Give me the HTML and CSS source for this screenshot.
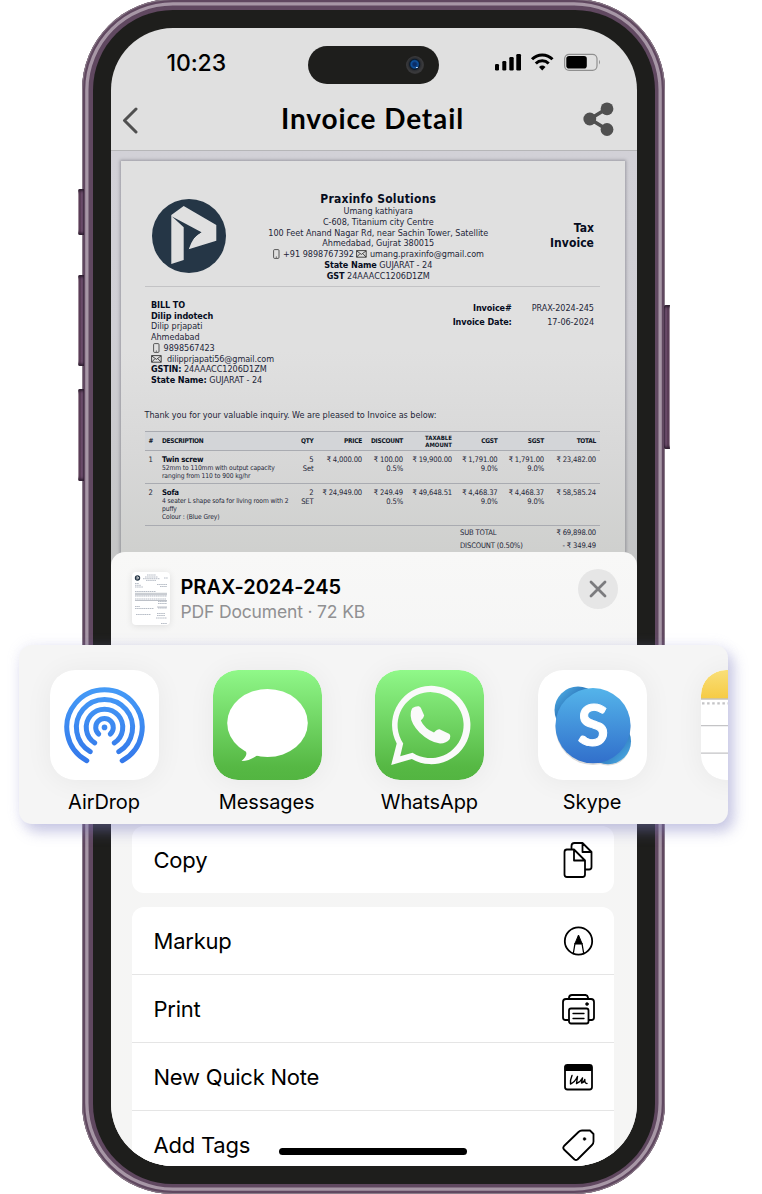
FILE: index.html
```html
<!DOCTYPE html>
<html lang="en">
<head>
<meta charset="utf-8">
<title>Invoice Detail</title>
<link rel="stylesheet" href="styles.css">
</head>
<body>
<svg width="0" height="0" class="defs">
  <defs>
    <symbol id="mobile" viewBox="0 0 7 10"><rect x=".6" y=".6" width="5.4" height="8.8" rx="1" fill="none" stroke="#333" stroke-width=".8"/><path d="M2.8 8.1h1.2" stroke="#333" stroke-width=".8"/></symbol>
    <symbol id="mail" viewBox="0 0 11 8"><path d="M.6.6h9.6v6.6H.6zM.6.8l4.8 3.6L10.200.8M.6 7.200l3.200-3.400M10.200 7.200 7 3.800" fill="none" stroke="#333" stroke-width=".9"/></symbol>
  </defs>
</svg>
<div class="stage">
  <div class="phone">
    <i class="key key-mute"></i><i class="key key-up"></i><i class="key key-down"></i><i class="key key-power"></i>
    <div class="bezel">
    <div class="screen">
      <div class="status">
        <span class="time">10:23</span>
        <span class="island"><i class="camera"></i></span>
        <svg class="signals" width="106" height="18" viewBox="0 0 106 18">
          <rect x="0" y="11" width="4" height="6.500" rx="1.200"/><rect x="7.300" y="8" width="4" height="9.500" rx="1.200"/><rect x="14.300" y="4" width="4.400" height="13.500" rx="1.200"/><rect x="21.300" y="1" width="4.700" height="16.500" rx="1.200"/>
          <g fill="none" stroke="#000" stroke-width="3"><path d="M37 6.300a14.500 14.500 0 0 1 20.500 0"/><path d="M40.800 10.500a9.200 9.200 0 0 1 12.900 0"/></g>
          <path d="M47.200 17.500l-3.200-3.400a4.800 4.800 0 0 1 6.500 0z"/>
          <rect x="69.600" y="1.300" width="32.400" height="16" rx="4.500" fill="none" stroke="#8f8f8f" stroke-width="1.200"/><rect x="71.300" y="3" width="20.500" height="12.600" rx="2.800"/><path d="M104 6.800q2 2.400 0 4.800z" fill="#8f8f8f"/>
        </svg>
      </div>
      <div class="nav">
        <svg class="back" width="16" height="27" viewBox="0 0 16 27"><path d="M14 2 2.500 13.500 14 25" fill="none" stroke="#505050" stroke-width="3" stroke-linecap="round" stroke-linejoin="round"/></svg>
        <h1>Invoice Detail</h1>
        <svg width="31" height="34" viewBox="0 0 31 34"><path d="M24 6.500 7 17l17 10.500" fill="none" stroke="#505050" stroke-width="3.600"/><circle cx="24" cy="6.800" r="6.400" fill="#505050"/><circle cx="6.800" cy="17" r="6.400" fill="#505050"/><circle cx="24" cy="27.500" r="6.400" fill="#505050"/></svg>
      </div>
      <div class="viewer">
        <div class="paper">
          <div class="letterhead">
            <svg class="logo" width="74" height="74" viewBox="0 0 74 74"><circle cx="37" cy="37" r="37" fill="#253646"/><path d="M19.300 16 31.700 7 64.300 26v15.700L36.700 50.300Q37 41 49.300 33.300L31.700 28.300V61L19.300 65Z" fill="#e0e0e0"/><path d="M20 17.600 49.500 33.300Q42 35.500 36.700 50.300L32 52V28.500Z" fill="#253646"/></svg>
            <div class="company">
              <h2>Praxinfo Solutions</h2>
              <p>Umang kathiyara</p>
              <p>C-608, Titanium city Centre</p>
              <p>100 Feet Anand Nagar Rd, near Sachin Tower, Satellite</p>
              <p>Ahmedabad, Gujrat 380015</p>
              <p><svg class="mob" width="7" height="10"><use href="#mobile"/></svg> +91 9898767392 <svg class="eml" width="11" height="8"><use href="#mail"/></svg> umang.praxinfo@gmail.com</p>
              <p><b>State Name</b> GUJARAT - 24</p>
              <p><b>GST</b> 24AAACC1206D1ZM</p>
            </div>
            <div class="kind">Tax<br>Invoice</div>
          </div>
          <div class="parties">
            <div class="billto">
              <p><b>BILL TO</b></p>
              <p><b>Dilip indotech</b></p>
              <p>Dilip prjapati</p>
              <p>Ahmedabad</p>
              <p><svg class="mob lead" width="7" height="10"><use href="#mobile"/></svg> 9898567423</p>
              <p class="tight"><svg class="eml" width="11" height="8"><use href="#mail"/></svg>&nbsp; dilipprjapati56@gmail.com</p>
              <p><b>GSTIN:</b> 24AAACC1206D1ZM</p>
              <p><b>State Name:</b> GUJARAT - 24</p>
            </div>
            <div class="meta">
              <b>Invoice#</b><span>PRAX-2024-245</span>
              <b>Invoice Date:</b><span>17-06-2024</span>
            </div>
          </div>
          <p class="thanks">Thank you for your valuable inquiry. We are pleased to Invoice as below:</p>
          <div class="row head"><span>#</span><span>DESCRIPTION</span><span>QTY</span><span>PRICE</span><span>DISCOUNT</span><span class="two">TAXABLE<br>AMOUNT</span><span>CGST</span><span>SGST</span><span>TOTAL</span></div>
          <div class="row first"><span>1</span><div class="item"><b>Twin screw</b><small>52mm to 110mm with output capacity</small><small>ranging from 110 to 900 kg/hr</small></div><span>5<br>Set</span><span>₹ 4,000.00</span><span>₹ 100.00<br>0.5%</span><span>₹ 19,900.00</span><span>₹ 1,791.00<br>9.0%</span><span>₹ 1,791.00<br>9.0%</span><span>₹ 23,482.00</span></div>
          <div class="row second"><span>2</span><div class="item"><b>Sofa</b><small>4 seater L shape sofa for living room with 2</small><small>puffy</small><small>Colour : (Blue Grey)</small></div><span>2<br>SET</span><span>₹ 24,949.00</span><span>₹ 249.49<br>0.5%</span><span>₹ 49,648.51</span><span>₹ 4,468.37<br>9.0%</span><span>₹ 4,468.37<br>9.0%</span><span>₹ 58,585.24</span></div>
          <div class="totals"><span>SUB TOTAL</span><span>₹ 69,898.00</span><span>DISCOUNT (0.50%)</span><span>- ₹ 349.49</span></div>
        </div>
      </div>
      <div class="sheet">
        <div class="file">
          <svg class="thumb" width="38" height="53" viewBox="0 0 38 53">
            <circle cx="5.500" cy="6" r="2.700" fill="#253646"/><path d="M5 4.500v3M5 4.700l2 1.200-1.500.8" stroke="#fff" stroke-width=".7" fill="none"/>
            <g stroke="#8790a0" stroke-width=".7" stroke-dasharray="1.600 .5" opacity=".85"><path d="M15 3h9M13 5h13M11 6.700h17M14 8.400h10M32 6h4M3 11.500h4M3 13.300h6M3 15h8M25 12.500h10M28 14.500h7M3 19.500h21M3 24h32M3 27h31M26 29.500h9M26 31.500h9M26 36h9M3 34.500h5M3 36.500h19M4 42.500h15M25 41.500h8M25 43.500h8M24 46h11M29 51.500h6"/></g>
            <g stroke="#7a8291" stroke-width=".5"><path d="M3 21.300h32M3 22.700h32M25 35h10M3 28.500h32"/></g>
          </svg>
          <div class="names"><strong>PRAX-2024-245</strong><span>PDF Document · 72 KB</span></div>
          <span class="close"><svg width="18" height="18" viewBox="0 0 18 18"><path d="M2 2l14 14M16 2 2 16" stroke="#7b7b7e" stroke-width="2.800" stroke-linecap="round"/></svg></span>
        </div>
        <div class="card copy">
          <div class="action"><span>Copy</span>
            <svg width="34" height="40" viewBox="0 0 34 40"><path d="M10.500 8V6a3 3 0 0 1 3-3H21.500l9 9v15a2.500 2.500 0 0 1-2.500 2.500h-4M21.500 3v9h9M5.500 9.500h7.500L24 20.500v14a2.500 2.500 0 0 1-2.500 2.500H6a2.500 2.500 0 0 1-2.500-2.500V12a2.500 2.500 0 0 1 2.500-2.500M13 9.500V20.500H24"/></svg></div>
        </div>
        <div class="card">
          <div class="action"><span>Markup</span>
            <svg width="34" height="34" viewBox="0 0 34 34"><circle cx="17.500" cy="17" r="13.700"/><path d="M12.300 29.500 14 19.500h7L22.700 29.500" stroke-width="1.300"/><path d="M14 19.500 17.500 11l3.500 8.500z" fill="#000" stroke-width="1"/></svg></div>
          <div class="action"><span>Print</span>
            <svg width="34" height="34" viewBox="0 0 34 34"><path d="M7 28H4.500a2.500 2.500 0 0 1-2.500-2.500V10a3 3 0 0 1 3-3h25a3 3 0 0 1 3 3v15.500a2.500 2.500 0 0 1-2.500 2.500H28M8 7V5.500A3 3 0 0 1 11 3h13.500A3 3 0 0 1 27 5.500V7"/><rect x="8" y="16.500" width="19.500" height="15" rx="2"/><path d="M12 21.500h11M12 26.500h11" stroke-width="1.300"/><circle cx="26" cy="12" r="1.500" fill="#000" stroke-width=".5"/></svg></div>
          <div class="action"><span>New Quick Note</span>
            <svg width="34" height="34" viewBox="0 0 34 34"><rect x="4" y="5" width="27" height="24.500" rx="2.500"/><path d="M4.500 6h26v4.500h-26z" fill="#000" stroke-width="1"/><path d="M11 15.500Q9 20 9.500 24 14 22 16.500 16.500L15.500 23.500Q19.500 22 21.500 18L20.500 23Q23 22.500 23.800 19.500 23.500 23.500 26 23.500" stroke-width="1.400"/></svg></div>
          <div class="action"><span>Add Tags</span>
            <svg width="34" height="34" viewBox="0 0 34 34"><path d="M3 18 17.500 4Q19 2.500 21 2.500h8l3.500 3.500v7.500q0 2-1.500 3.500L16.500 31.500q-1.500 1-3 0L3 21.500Q1.500 19.800 3 18Z"/><circle cx="23.500" cy="11" r="1.400" fill="#000" stroke-width=".4"/></svg></div>
        </div>
        <i class="home"></i>
      </div>
    </div>
    </div>
  </div>

  <div class="share">
    <div class="app">
      <svg width="109" height="110" viewBox="0 0 109 110"><defs><linearGradient id="ad" gradientUnits="userSpaceOnUse" x1="0" y1="17" x2="0" y2="93"><stop offset="0" stop-color="#459bf7"/><stop offset="1" stop-color="#3478ea"/></linearGradient></defs>
        <rect width="109" height="110" rx="25" fill="#fff"/>
        <g fill="none" stroke="url(#ad)" stroke-width="5" stroke-linecap="round"><path d="M36.800 90.700a37.700 37.700 0 1 1 35.400 0"/><path d="M40.200 81.700a28.100 28.100 0 1 1 28.600 0"/><path d="M44.700 72.800a18.250 18.250 0 1 1 19.600 0"/><path d="M48.700 64a8.800 8.800 0 1 1 11.600 0"/></g><circle cx="54.500" cy="57.400" r="2.800" fill="#3c88f0"/></svg>
      <span>AirDrop</span>
    </div>
    <div class="app">
      <svg width="109" height="110" viewBox="0 0 109 110"><defs><linearGradient id="gr" x1="0" y1="0" x2="0" y2="1"><stop offset="0" stop-color="#90f989"/><stop offset=".1" stop-color="#89f081"/><stop offset=".88" stop-color="#56b844"/><stop offset="1" stop-color="#53b541"/></linearGradient></defs>
        <rect width="109" height="110" rx="25" fill="url(#gr)"/><ellipse cx="54.500" cy="53" rx="40.300" ry="34" fill="#fff"/><path d="M32 80Q36 85 28.500 91 36 91 44 85.500L54 84 40 76Z" fill="#fff"/></svg>
      <span>Messages</span>
    </div>
    <div class="app">
      <svg width="109" height="110" viewBox="0 0 109 110"><rect width="109" height="110" rx="25" fill="url(#gr)"/>
        <path fill="#fafafa" fill-rule="evenodd" d="M16.200 95 21.700 73.500A39.200 39.200 0 1 1 36.800 89ZM25.200 86.200 37.500 82.700A33 33 0 1 0 28.200 73.500Z"/>
        <path fill="#fafafa" d="M37.500 38Q40.500 35.800 44 36.200L45.800 37.800 49.200 45.600Q49 47.500 45.800 50.400 49.500 58.500 59 62.600 62.500 59 64.500 59.300L74.500 64Q76 65.500 74.800 69 71.500 73.300 65 73.500 55 72.500 44.500 62.500 36 53.500 35.700 46 35.500 40.500 37.500 38Z"/></svg>
      <span>WhatsApp</span>
    </div>
    <div class="app">
      <svg width="109" height="110" viewBox="0 0 109 110"><defs><linearGradient id="sk" x1="0" y1="0" x2="0" y2="1"><stop offset="0" stop-color="#54b4ea"/><stop offset="1" stop-color="#316fcb"/></linearGradient><linearGradient id="sa" x1="0" y1="0" x2="1" y2="1"><stop offset=".1" stop-color="#4ba9e2"/><stop offset=".42" stop-color="#2a70b5"/></linearGradient><linearGradient id="sb" x1="0" y1="0" x2="1" y2="1"><stop offset=".6" stop-color="#2f78bd"/><stop offset=".9" stop-color="#4aa9e2"/></linearGradient></defs>
        <rect width="109" height="110" rx="25" fill="#fff"/>
        <g fill="#000" opacity=".14"><circle cx="55" cy="57.500" r="37.500"/><circle cx="70" cy="73" r="22.500"/></g>
        <circle cx="40" cy="40" r="23.500" fill="url(#sa)"/><circle cx="70" cy="71.300" r="23" fill="url(#sb)"/>
        <circle cx="55" cy="55.700" r="37.600" fill="url(#sk)"/><text x="55" y="75.500" class="skype-s" text-anchor="middle">S</text></svg>
      <span>Skype</span>
    </div>
    <div class="app notes">
      <svg width="109" height="110" viewBox="0 0 109 110"><defs><linearGradient id="nt" x1="0" y1="0" x2="0" y2="1"><stop offset="0" stop-color="#f9df78"/><stop offset="1" stop-color="#f6cb45"/></linearGradient><clipPath id="nc"><rect width="109" height="110" rx="25"/></clipPath></defs>
        <g clip-path="url(#nc)"><rect width="109" height="110" fill="#fff"/><rect width="109" height="28.500" fill="url(#nt)"/><path d="M0 29h109" stroke="#a9a494" stroke-width="1.200"/><path d="M1 33.300h109" stroke="#c4c4c6" stroke-width="2.200" stroke-dasharray="2.500 2.600"/><path d="M0 55.700h109M0 83.200h109" stroke="#c4c4c6" stroke-width="1.200"/></g></svg>
    </div>
  </div>
</div>
</body>
</html>
```
FILE: styles.css
```css
* { box-sizing: border-box; }
body { margin: 0; background: #fff; font-family: Inter, "Liberation Sans", sans-serif; color: #000; }
h1, h2, p { margin: 0; font-weight: inherit; }
.defs { position: absolute; }
.stage { position: relative; width: 762px; height: 1194px; overflow: hidden; }

/* handset */
.phone {
  position: relative; width: 583px; height: 1195px; margin: -1px 0 0 82px; padding: 10.5px; border-radius: 91px;
  background: #604860;
  box-shadow: inset 0 0 0 1px #8a7b88, inset 0 0 0 3.200px #604860, inset 0 0 0 6.500px #a797a6;
}
.bezel { height: 1174px; border-radius: 80px; background: #1e1e1c; padding: 18.500px 18px 18px 18.500px; }
.key { position: absolute; width: 6px; left: -4.500px; border-radius: 2px 0 0 2px; background: linear-gradient(90deg, #a996a5 0 1px, #5a3d57 1px 2.500px, #705070 4px, #3d2940); box-shadow: inset 0 4px 3px -2px #2c1d2e, inset 0 -4px 3px -2px #2c1d2e; }
.key-mute { top: 190px; height: 46px; }
.key-up { top: 276px; height: 91px; }
.key-down { top: 390px; height: 92px; }
.key-power { top: 306px; height: 144px; left: auto; right: -4.500px; border-radius: 0 2px 2px 0; transform: scaleX(-1); }

.screen { width: 525.500px; height: 1137.500px; border-radius: 62px; overflow: hidden; display: flex; flex-direction: column; background: #e0e0e0; }

.status { height: 60px; padding: 13px 36px 0 55.500px; display: grid; grid-template-columns: 141.500px 131px 1fr; align-items: center; flex: none; }
.time { font-size: 23px; font-weight: 500; letter-spacing: -.1px; line-height: 36px; margin-top: -3px; }
.island { width: 131px; height: 38px; border-radius: 19px; background: #1e1e1c; display: flex; align-items: center; justify-content: flex-end; padding-right: 15px; }
.camera { width: 18px; height: 18px; border-radius: 50%; background: radial-gradient(circle at 60% 64%, #d8e8ff 0 .6px, transparent 1px), radial-gradient(circle at 48% 46%, #0b2d66 0 1.500px, #0f54a0 3.500px, #0b1a2c 5px, #2b2d31 6px, #3a3a3c 8px, #28282a); }
.signals { justify-self: end; margin-top: -5px; }

.nav { height: 63px; flex: none; padding: 0 23px 0 11px; display: flex; align-items: center; border-bottom: 1px solid #b6b6b8; }
.back { margin-top: 2px; }
.nav h1 { flex: 1; font-family: Lato, sans-serif; font-weight: 700; font-size: 28px; letter-spacing: .88px; margin: -3px 0 0 143px; line-height: 34px; }

/* document preview */
.viewer { flex: none; height: 414.500px; margin-bottom: -14px; padding: 10px 11.500px 0 9.500px; background: linear-gradient(#d2d1d7 0, #d0cfd5 180px, #c4c5c5); overflow: hidden; }
.paper { height: 440px; padding: 32px 25px 0 24px; background: linear-gradient(#e0e0e0 0, #e0e0e0 190px, #d8d8d8 290px, #cfd0ce 390px); box-shadow: 0 0 3px 1px rgba(70, 70, 80, .4); font: 9px/10.700px "DejaVu Sans Condensed", "DejaVu Sans", sans-serif; color: #1e2638; white-space: nowrap; letter-spacing: -.03px; }
.paper b, .paper h2, .kind { color: #060c20; letter-spacing: -.1px; }
.letterhead { height: 94px; display: grid; grid-template-columns: 81px 1fr 81px; border-bottom: 1.500px solid #c3c3c5; }
.logo { margin: 6px 0 0 7px; }
.company { text-align: center; margin-left: 12px; }
.company h2 { font-size: 12px; font-weight: 700; line-height: 13.300px; letter-spacing: .24px; }
.mob, .eml { vertical-align: -2px; }
.mob { margin-right: 1px; }
.eml { vertical-align: -1px; }
.lead { margin-left: 2px; }
.paper .tight { letter-spacing: -.08px; }
.kind { font-size: 12px; font-weight: 700; line-height: 15px; text-align: right; padding: 28px 6px 0 0; }
.paper .kind { letter-spacing: .06px; }
.parties { display: flex; justify-content: space-between; padding: 13px 6px 0 6.500px; height: 121px; }
.meta { display: grid; grid-template-columns: auto auto; gap: 0 20px; text-align: right; align-content: start; line-height: 14px; padding-top: 1px; }
.thanks { line-height: 14px; margin: -.5px 0 9.300px; letter-spacing: -.02px; }
.row { display: grid; grid-template-columns: 17.500px 114px 37.500px 48.500px 41px 49px 45.500px 46.500px 52px; padding-right: 4px; text-align: right; border-bottom: 1px solid #a9abb1; font-size: 7.600px; line-height: 8.800px; letter-spacing: -.16px; padding-top: 5px; }
.row > span:first-child { text-align: left; padding-left: 4px; }
.head { height: 20.500px; border-top: 1.500px solid #a9abb1; border-bottom-width: 1.500px; background: #d3d5d8; font-size: 6.500px; font-weight: 700; letter-spacing: -.27px; color: #0d1424; align-items: center; padding-top: 0; }
.head > span:nth-child(2) { text-align: left; }
.two { line-height: 7.500px; font-size: 6px; letter-spacing: 0; }
.first { height: 33.200px; }
.second { height: 41.500px; }
.item { text-align: left; }
.item b { display: block; font-size: 7.800px; letter-spacing: -.2px; }
.item small { display: block; font-size: 6.700px; line-height: 7.900px; letter-spacing: -.1px; }
.totals { display: grid; grid-template-columns: 1fr auto; padding: 0 4px 0 315.500px; font-size: 7.600px; line-height: 13px; letter-spacing: -.16px; }
.totals > :nth-child(even) { text-align: right; }

/* share sheet */
.sheet { position: relative; flex: 1; min-height: 0; border-radius: 14px 14px 0 0; background: linear-gradient(#f8f8f7, #f5f5f5 120px, #f5f5f4); padding: 0 22.500px 0 21px; overflow: hidden; }
.file { display: flex; align-items: flex-start; height: 274.500px; padding-top: 20px; }
.thumb { background: #fff; border-radius: 4px; box-shadow: 0 1px 7px rgba(0, 0, 0, .1); }
.names { display: flex; flex-direction: column; margin-left: 10.500px; flex: 1; }
.names strong { font-size: 20px; font-weight: 600; line-height: 26px; letter-spacing: -.03px; margin-top: 2px; }
.names span { font-size: 17.500px; line-height: 24px; letter-spacing: -.16px; color: #909092; }
.close { width: 40px; height: 40px; border-radius: 50%; background: #e6e6e6; display: grid; place-items: center; margin: -2.500px -4px 0 0; }
.card { background: #fff; border-radius: 12px; overflow: hidden; margin-bottom: 14px; }
.action { height: 68px; display: flex; align-items: center; justify-content: space-between; padding: 0 19px 0 21.500px; border-bottom: 1px solid #e5e5e5; font-size: 22px; letter-spacing: -.22px; }
.copy .action { height: 67px; border: 0; }
.action svg { fill: none; stroke: #000; stroke-width: 1.800; stroke-linejoin: round; stroke-linecap: round; }
.home { position: absolute; left: 168px; bottom: 10.500px; width: 188px; height: 7.500px; border-radius: 4px; background: #000; }

/* enlarged app strip */
.share { position: absolute; left: 18.500px; top: 645px; width: 709.500px; height: 179px; border-radius: 13px; overflow: hidden; background: #f5f5f5; display: flex; gap: 53.700px; padding: 25px 0 0 31.500px; box-shadow: 6px 8px 14px rgba(120, 120, 190, .38), 0 0 14px rgba(150, 150, 215, .14); }
.app { flex: none; width: 109px; display: flex; flex-direction: column; align-items: center; font-size: 20px; line-height: 24px; letter-spacing: -.1px; }
.app span { margin-right: 1px; }
.app svg { flex: none; margin-bottom: 10px; border-radius: 25px; box-shadow: 0 2px 28px rgba(0, 0, 0, .055); }
.skype-s { font: 700 57px Lato, sans-serif; fill: #fff; stroke: #fff; stroke-width: 1; }
```
